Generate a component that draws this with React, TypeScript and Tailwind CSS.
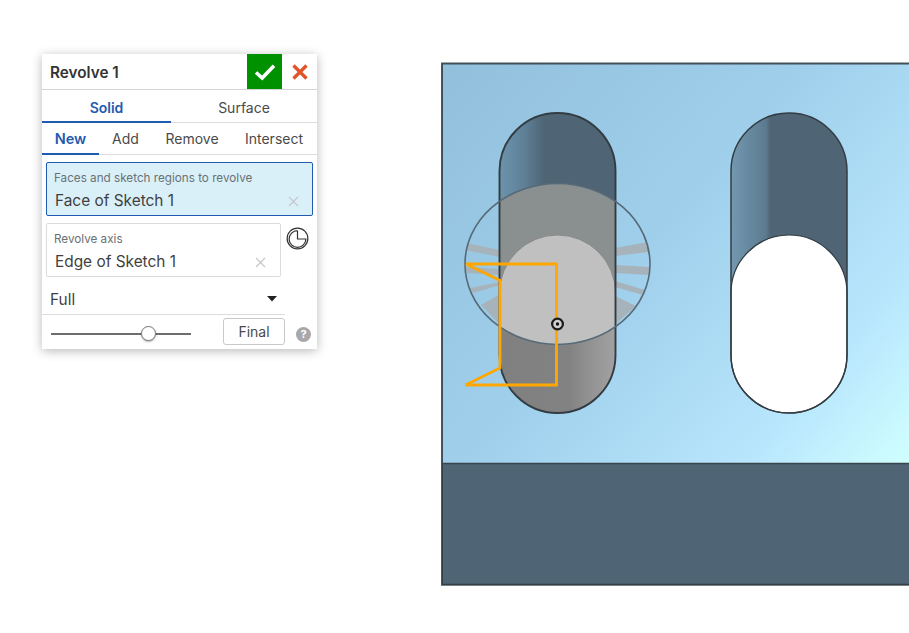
import React from "react";

const font = { fontFamily: "Inter, 'Noto Sans', sans-serif" };

function Field({ label, value, active }: { label: string; value: string; active?: boolean }) {
  return (
    <div
      className={
        active
          ? "h-[54px] rounded-[2px] border border-[#1f5bb0] bg-[#d9f0f9] pl-[7px] pr-[13px] pt-[7px]"
          : "h-[54px] flex-1 rounded-[2px] border border-[#dcdcdc] bg-white pl-[7px] pr-[14px] pt-[7px]"
      }
    >
      <div className="text-[11.7px] leading-[16px] text-[#6a7074]">{label}</div>
      <div className="mt-[5px] flex items-center justify-between pl-px text-[15.4px] leading-[20px] text-[#3f3f3f]">
        <span>{value}</span>
        <svg width="11" height="11" viewBox="0 0 11 11" className="mt-[1px]">
          <path d="M1 1 L10 10 M10 1 L1 10" stroke="#c3c7ca" strokeWidth="1.1" fill="none" />
        </svg>
      </div>
    </div>
  );
}

function Panel() {
  return (
    <div className="w-[275px] h-[295px] shrink-0 bg-white shadow-[0_2px_10px_rgba(0,0,0,0.28)]" style={font}>
      <div className="flex h-[36px] items-start border-b border-[#d4d4d4]">
        <div className="flex-1 pl-[8px] pt-[9px] text-[15.3px] font-semibold leading-[20px] text-[#333]">Revolve 1</div>
        <div className="flex h-[35px] w-[35px] items-center justify-center bg-[#009100]">
          <svg width="22" height="18" viewBox="0 0 22 18">
            <path d="M2 9.5 L8.2 15 L20 2.8" stroke="#fff" strokeWidth="3.6" fill="none" />
          </svg>
        </div>
        <div className="flex h-[35px] w-[35px] items-center justify-center">
          <svg width="16" height="16" viewBox="0 0 16 16">
            <path d="M1.5 1.5 L14.5 14.5 M14.5 1.5 L1.5 14.5" stroke="#e2542a" strokeWidth="3.4" fill="none" />
          </svg>
        </div>
      </div>
      <div className="flex h-[33px] border-b border-[#dcdcdc] text-[14px] leading-[20px]">
        <div className="w-[129px] border-b-2 border-[#1f5bb0] -mb-px pt-[8px] text-center font-semibold text-[#1f5bb0]">Solid</div>
        <div className="flex-1 pt-[8px] text-center text-[#4a4a4a]">Surface</div>
      </div>
      <div className="flex h-[32px] border-b border-[#dcdcdc] text-[14px] leading-[20px] text-[#4a4a4a]">
        <div className="w-[57px] border-b-2 border-[#1f5bb0] -mb-px pt-[6px] text-center font-semibold text-[#1f5bb0] text-[14.5px]">New</div>
        <div className="w-[53px] pt-[6px] text-center">Add</div>
        <div className="w-[78px] pt-[6px] pl-[2px] text-center">Remove</div>
        <div className="flex-1 pt-[6px] pl-[1px] text-center">Intersect</div>
      </div>
      <div className="px-[4px] pt-[7px]">
        <Field label="Faces and sketch regions to revolve" value="Face of Sketch 1" active />
      </div>
      <div className="flex items-start pl-[4px] pt-[7px]">
        <Field label="Revolve axis" value="Edge of Sketch 1" />
        <div className="w-[36px] shrink-0 pl-[5px] pt-[4px]">
          <svg width="23" height="23" viewBox="0 0 22 22">
            <circle cx="11" cy="11" r="9.9" stroke="#333" strokeWidth="1.15" fill="none" />
            <path d="M11 3.5 V11.5 H19 A8 8 0 1 1 11 3.5" stroke="#333" strokeWidth="1.15" fill="none" />
          </svg>
        </div>
      </div>
      <div className="flex h-[38px] w-[243px] items-center justify-between border-b border-[#dcdcdc] pl-[8px] pr-[8px] text-[15.4px] text-[#3f3f3f]">
        <span className="mt-[8px]">Full</span>
        <svg width="10" height="6" viewBox="0 0 10 6" className="mt-[6px]">
          <path d="M0 0 H10 L5 5.5 Z" fill="#222" />
        </svg>
      </div>
      <div className="flex items-start pl-[9px] pt-[3px]">
        <div className="relative mt-[15px] h-[2px] w-[140px] bg-[#6d6d6d]">
          <div className="absolute left-[90px] top-[-7px] h-[15px] w-[15px] rounded-full border border-[#777] bg-white shadow-[0_1px_2px_rgba(0,0,0,0.3)]" />
        </div>
        <div className="ml-[32px] flex h-[27px] w-[62px] items-center justify-center rounded-[3px] border border-[#c9c9c9] text-[14px] text-[#4a4a4a]">Final</div>
        <div className="ml-[11px] mt-[9px] flex h-[15px] w-[15px] items-center justify-center rounded-full bg-[#a8a8a8] text-[11px] font-bold leading-none text-white">?</div>
      </div>
    </div>
  );
}

function Scene() {
  const slot = (cx: number) => `M${cx - 58} 171 A58 58 0 0 1 ${cx + 58} 171 V355 A58 58 0 0 1 ${cx - 58} 355 Z`;
  const lower = (cx: number) => `M${cx - 58} 293 A58 58 0 0 1 ${cx + 58} 293 V355 A58 58 0 0 1 ${cx - 58} 355 Z`;
  return (
    <svg width="469" height="525" viewBox="440 62 469 525" className="mt-[8px] ml-[123px] shrink-0">
      <defs>
        <linearGradient id="bg" gradientUnits="userSpaceOnUse" x1="442" y1="63" x2="909" y2="463">
          <stop offset="0" stopColor="#92c0dc" />
          <stop offset="0.45" stopColor="#9fcfeb" />
          <stop offset="0.8" stopColor="#b8e6fd" />
          <stop offset="1" stopColor="#d0ffff" />
        </linearGradient>
        <linearGradient id="wall1" gradientUnits="userSpaceOnUse" x1="500" y1="0" x2="616" y2="0">
          <stop offset="0" stopColor="#6c93ac" />
          <stop offset="0.2" stopColor="#5f8198" />
          <stop offset="0.38" stopColor="#4f6575" />
          <stop offset="1" stopColor="#4f6575" />
        </linearGradient>
        <linearGradient id="wall2" gradientUnits="userSpaceOnUse" x1="731" y1="0" x2="847" y2="0">
          <stop offset="0" stopColor="#7398af" />
          <stop offset="0.3" stopColor="#5c7b90" />
          <stop offset="0.34" stopColor="#4f6575" />
          <stop offset="1" stopColor="#4f6575" />
        </linearGradient>
        <linearGradient id="under" gradientUnits="userSpaceOnUse" x1="500" y1="0" x2="616" y2="0">
          <stop offset="0" stopColor="#808080" />
          <stop offset="0.6" stopColor="#828282" />
          <stop offset="0.75" stopColor="#909090" />
          <stop offset="1" stopColor="#a2a2a2" />
        </linearGradient>
        <clipPath id="disc">
          <ellipse cx="557.5" cy="264" rx="92.5" ry="80.5" />
        </clipPath>
        <clipPath id="slotClip">
          <path d={slot(557.5)} />
        </clipPath>
      </defs>

      <rect x="442" y="63" width="467" height="400" fill="url(#bg)" />
      <rect x="442" y="463" width="467" height="122" fill="#4f6575" />
      <path d="M909 63.5 H442 V584.8 H909" fill="none" stroke="#2f3a40" strokeWidth="2" strokeOpacity="0.85" />
      <path d="M442 463.5 H909" stroke="#38454d" strokeWidth="1.6" />

      {/* right slot */}
      <path d={slot(789)} fill="url(#wall2)" />
      <path d={lower(789)} fill="#fff" />
      <path d={slot(789)} fill="none" stroke="#333c42" strokeWidth="1.5" />
      <path d={lower(789)} fill="none" stroke="#333c42" strokeWidth="1.2" />

      {/* rays behind the disc */}
      <g clipPath="url(#disc)" fill="#a7b3bb">
        <polygon points="466,243 500,250 500,257 465,250" />
        <polygon points="465,267 500,269 500,275 465,273" />
        <polygon points="470,288 500,282 500,285 473,293" />
        <polygon points="481,305 500,294 500,325" />
        <polygon points="615,248 648,242 648,252 615,256" />
        <polygon points="615,265 650,267 650,275 615,273" />
        <polygon points="615,281 645,290 643,295 615,287" />
        <polygon points="615,296 636,306 618,322 615,325" />
      </g>

      {/* left slot */}
      <path d={slot(557.5)} fill="url(#wall1)" />
      <g clipPath="url(#slotClip)">
        <path d={lower(557.5)} fill="url(#under)" />
        <ellipse cx="557.5" cy="264" rx="92.5" ry="80.5" fill="#8a9090" />
        <g clipPath="url(#disc)">
          <path d={lower(557.5)} fill="#c0c0c0" stroke="#888" strokeWidth="1" />
        </g>
      </g>
      <path d={slot(557.5)} fill="none" stroke="#333c42" strokeWidth="1.9" />
      <ellipse cx="557.5" cy="264" rx="92.5" ry="80.5" fill="none" stroke="#566a77" strokeWidth="1.6" />

      <path d="M466 264 H556.5 V385 H465.5 L500 368 V280.5 Z" fill="none" stroke="#ffa700" strokeWidth="2.8" />
      <circle cx="557.5" cy="324" r="5.4" fill="#d0d0d0" stroke="#1b1b1b" strokeWidth="2.2" />
      <circle cx="557.5" cy="324" r="1.7" fill="#111" />
    </svg>
  );
}

export default function App() {
  return (
    <div className="flex h-[633px] w-[909px] items-start overflow-hidden bg-white pl-[42px] pt-[54px]">
      <Panel />
      <Scene />
    </div>
  );
}
